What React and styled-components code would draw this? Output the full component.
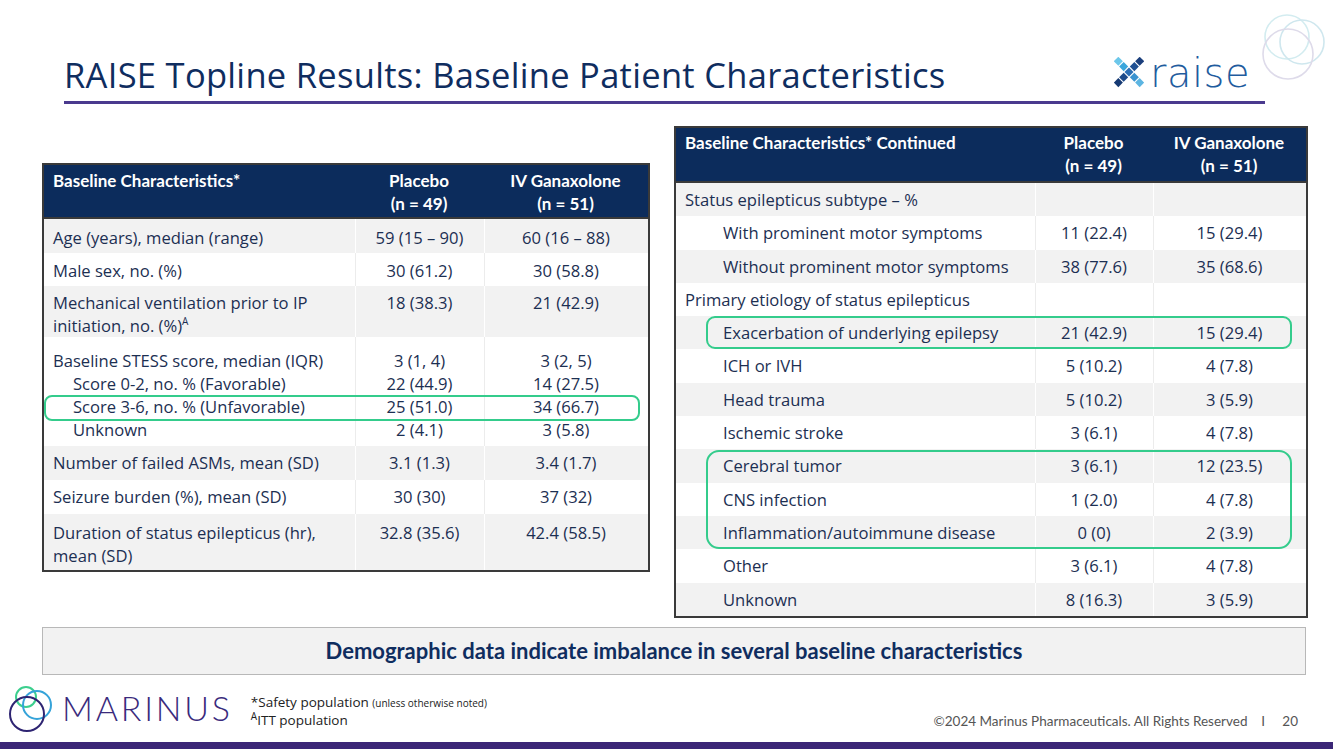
import React from "react";
import styled, { createGlobalStyle } from "styled-components";

const Global = createGlobalStyle`
  html, body { margin: 0; padding: 0; background: #fff; }
  body { font-family: "Open Sans", "Liberation Sans", sans-serif; }
`;

const NAVY = "#0c2c5c";
const TEXT = "#1c2f52";
const GREEN = "#34cc8c";

const Page = styled.div`
  width: 1333px;
  height: 749px;
  position: relative;
  overflow: hidden;
  display: flex;
  flex-direction: column;
  background: #fff;
`;

const Header = styled.header`
  margin: 0 68px 0 64px;
  padding-top: 53px;
  padding-bottom: 6px;
  border-bottom: 3px solid #4a3a8e;
  display: flex;
  align-items: flex-end;
  justify-content: space-between;
`;

const Title = styled.h1`
  margin: 0;
  font-family: "Open Sans", "Liberation Sans", sans-serif;
  font-weight: 400;
  font-size: 34.5px;
  line-height: 40px;
  color: #0f2d5f;
  letter-spacing: 0.3px;
  white-space: nowrap;
`;

const Brand = styled.div`
  display: flex;
  align-items: center;
  gap: 6px;
  margin-bottom: 2px;
  margin-right: 15px;
`;

const BrandWord = styled.span`
  font-family: "DejaVu Sans", Lato, sans-serif;
  font-weight: 200;
  font-size: 40px;
  line-height: 40px;
  color: #1f5c9e;
  letter-spacing: 0.5px;
`;

const Deco = styled.svg`
  position: absolute;
  right: 0;
  top: 0;
`;

const Content = styled.main`
  display: flex;
  align-items: flex-start;
  gap: 24px;
  padding: 22px 0 0 42px;
`;

const TableBox = styled.div`
  position: relative;
  width: ${(p) => p.w}px;
  margin-top: ${(p) => p.top || 0}px;
  border: 2px solid #3a3a3a;
  box-sizing: border-box;
  color: ${TEXT};
`;

const Row = styled.div`
  display: grid;
  grid-template-columns: ${(p) => p.cols};
  background: ${(p) => (p.head ? NAVY : p.shade ? "#f2f2f2" : "#fff")};
  color: ${(p) => (p.head ? "#fff" : TEXT)};
  font-family: ${(p) => (p.head ? "Lato, 'Open Sans', sans-serif" : "'Open Sans', sans-serif")};
  font-weight: ${(p) => (p.head ? 700 : 400)};
  font-size: ${(p) => (p.head ? "17px" : "16.6px")};
  min-height: ${(p) => p.h}px;
  box-sizing: border-box;
  border-bottom: ${(p) => (p.head ? "2px solid #3a3a3a" : "none")};
`;

const Cell = styled.div`
  padding: ${(p) => p.pt ?? 5}px 10px 0 ${(p) => (p.indent ? 47 : 9)}px;
  line-height: 23px;
  text-align: ${(p) => (p.center ? "center" : "left")};
  border-left: ${(p) => (p.sep ? `1px solid ${p.sepColor}` : "none")};
  white-space: nowrap;
`;

const Sub = styled.div`
  padding-left: ${(p) => (p.in ? 20 : 0)}px;
`;

const Sup = styled.sup`
  font-size: 10px;
  line-height: 0;
`;

const Highlight = styled.div`
  position: absolute;
  left: ${(p) => p.x}px;
  top: ${(p) => p.y}px;
  width: ${(p) => p.w}px;
  height: ${(p) => p.h}px;
  border: 2.5px solid ${GREEN};
  border-radius: ${(p) => p.r}px;
  box-sizing: border-box;
  pointer-events: none;
`;

const Banner = styled.div`
  margin: ${(p) => p.mt}px 0 0 42px;
  width: 1264px;
  height: 48px;
  box-sizing: border-box;
  background: #f2f2f2;
  border: 1px solid #b8b8b8;
  display: flex;
  align-items: center;
  justify-content: center;
  font-family: Lato, "Open Sans", sans-serif;
  font-weight: 700;
  font-size: 22px;
  color: #0f2d5f;
`;

const Footer = styled.footer`
  flex: 1;
  display: flex;
  align-items: center;
  padding: 0 35px 0 8px;
`;

const Logo = styled.div`
  display: flex;
  align-items: center;
  gap: 6px;
`;

const LogoWord = styled.span`
  font-family: Lato, "Liberation Sans", sans-serif;
  font-weight: 300;
  font-size: 34px;
  letter-spacing: 2.8px;
  color: #3a2a7c;
  line-height: 40px;
`;

const Notes = styled.div`
  margin-left: 18px;
  margin-top: 6px;
  font-size: 13.5px;
  line-height: 17px;
  color: #222;
`;

const Small = styled.span`
  font-size: 10px;
`;

const Copy = styled.div`
  margin-left: auto;
  margin-top: 26px;
  font-family: Lato, "Open Sans", sans-serif;
  font-size: 13.5px;
  color: #555;
  white-space: pre;
`;

const BottomBar = styled.div`
  height: 7px;
  background: #3b2677;
`;

const LEFT_COLS = "311px 129px 164px";
const RIGHT_COLS = "359px 118px 153px";

const leftRows = [
  { h: 34, pt: 7, label: "Age (years), median (range)", a: "59 (15 – 90)", b: "60 (16 – 88)" },
  { h: 33, pt: 6, label: "Male sex, no. (%)", a: "30 (61.2)", b: "30 (58.8)" },
  {
    h: 51,
    label: (
      <>
        Mechanical ventilation prior to IP
        <br />
        initiation, no. (%)<Sup>A</Sup>
      </>
    ),
    a: "18 (38.3)",
    b: "21 (42.9)",
    pt: 5,
  },
  {
    h: 109,
    pt: 12,
    label: (
      <>
        <Sub>Baseline STESS score, median (IQR)</Sub>
        <Sub in>Score 0-2, no. % (Favorable)</Sub>
        <Sub in>Score 3-6, no. % (Unfavorable)</Sub>
        <Sub in>Unknown</Sub>
      </>
    ),
    a: (
      <>
        <Sub>3 (1, 4)</Sub>
        <Sub>22 (44.9)</Sub>
        <Sub>25 (51.0)</Sub>
        <Sub>2 (4.1)</Sub>
      </>
    ),
    b: (
      <>
        <Sub>3 (2, 5)</Sub>
        <Sub>14 (27.5)</Sub>
        <Sub>34 (66.7)</Sub>
        <Sub>3 (5.8)</Sub>
      </>
    ),
  },
  { h: 34, label: "Number of failed ASMs, mean (SD)", a: "3.1 (1.3)", b: "3.4 (1.7)" },
  { h: 34, label: "Seizure burden (%), mean (SD)", a: "30 (30)", b: "37 (32)" },
  {
    h: 56,
    pt: 7,
    label: (
      <>
        Duration of status epilepticus (hr),
        <br />
        mean (SD)
      </>
    ),
    a: "32.8 (35.6)",
    b: "42.4 (58.5)",
  },
];

const rightRows = [
  { label: "Status epilepticus subtype – %", a: "", b: "" },
  { label: "With prominent motor symptoms", a: "11 (22.4)", b: "15 (29.4)", indent: true },
  { label: "Without prominent motor symptoms", a: "38 (77.6)", b: "35 (68.6)", indent: true },
  { label: "Primary etiology of status epilepticus", a: "", b: "" },
  { label: "Exacerbation of underlying epilepsy", a: "21 (42.9)", b: "15 (29.4)", indent: true },
  { label: "ICH or IVH", a: "5 (10.2)", b: "4 (7.8)", indent: true },
  { label: "Head trauma", a: "5 (10.2)", b: "3 (5.9)", indent: true },
  { label: "Ischemic stroke", a: "3 (6.1)", b: "4 (7.8)", indent: true },
  { label: "Cerebral tumor", a: "3 (6.1)", b: "12 (23.5)", indent: true },
  { label: "CNS infection", a: "1 (2.0)", b: "4 (7.8)", indent: true },
  { label: "Inflammation/autoimmune disease", a: "0 (0)", b: "2 (3.9)", indent: true },
  { label: "Other", a: "3 (6.1)", b: "4 (7.8)", indent: true },
  { label: "Unknown", a: "8 (16.3)", b: "3 (5.9)", indent: true },
];

function HeadRow({ cols, h, title, pt }) {
  return (
    <Row head cols={cols} h={h}>
      <Cell pt={pt}>{title}</Cell>
      <Cell pt={pt} center>
        Placebo
        <br />
        (n = 49)
      </Cell>
      <Cell pt={pt} center>
        IV Ganaxolone
        <br />
        (n = 51)
      </Cell>
    </Row>
  );
}

function BodyRow({ cols, r, shade, h }) {
  const sepColor = shade ? "#ffffff" : "#ececec";
  return (
    <Row cols={cols} shade={shade} h={h}>
      <Cell pt={r.pt} indent={r.indent}>{r.label}</Cell>
      <Cell pt={r.pt} center sep sepColor={sepColor}>{r.a}</Cell>
      <Cell pt={r.pt} center sep sepColor={sepColor}>{r.b}</Cell>
    </Row>
  );
}

function XMark() {
  const tiles = [
    { x: 4, y: 4, c: "#6cc7ea" },
    { x: 9, y: 9, c: "#3aa6dc" },
    { x: 24, y: 4, c: "#1b3f7c" },
    { x: 19, y: 9, c: "#1f4f92" },
    { x: 14, y: 14, c: "#2a6db4" },
    { x: 9, y: 19, c: "#1d4a8a" },
    { x: 4, y: 24, c: "#163a73" },
    { x: 19, y: 19, c: "#3a93d0" },
    { x: 24, y: 24, c: "#5cb5e2" },
  ];
  return (
    <svg width="30" height="32" viewBox="0 0 28 30">
      {tiles.map((t, i) => (
        <rect
          key={i}
          x={t.x - 3}
          y={t.y - 3}
          width="6"
          height="6"
          fill={t.c}
          transform={`rotate(45 ${t.x} ${t.y})`}
        />
      ))}
    </svg>
  );
}

function MarinusMark() {
  return (
    <svg width="48" height="50" viewBox="0 0 48 50">
      <circle cx="18" cy="14" r="10" fill="none" stroke="#3ccf8e" strokeWidth="2" />
      <circle cx="29" cy="22" r="14" fill="none" stroke="#35a3d9" strokeWidth="2" />
      <circle cx="19" cy="31" r="17" fill="none" stroke="#2e2472" strokeWidth="2" />
    </svg>
  );
}

export default function App() {
  return (
    <Page>
      <Global />
      <Deco width="80" height="90" viewBox="0 0 80 90">
        <circle cx="34" cy="37" r="22" fill="none" stroke="#d3ecf0" strokeWidth="1.6" />
        <circle cx="49" cy="42" r="22" fill="none" stroke="#cfe7ee" strokeWidth="1.6" />
        <circle cx="35" cy="54" r="25" fill="none" stroke="#dedbea" strokeWidth="1.6" />
      </Deco>
      <Header>
        <Title>RAISE Topline Results: Baseline Patient Characteristics</Title>
        <Brand>
          <XMark />
          <BrandWord>raise</BrandWord>
        </Brand>
      </Header>

      <Content>
        <TableBox w={608} top={37}>
          <HeadRow cols={LEFT_COLS} h={54} pt={4} title="Baseline Characteristics*" />
          {leftRows.map((r, i) => (
            <BodyRow key={i} cols={LEFT_COLS} r={r} h={r.h} shade={i % 2 === 0} />
          ))}
          <Highlight x={0} y={230} w={596} h={26} r={8} />
        </TableBox>

        <TableBox w={634}>
          <HeadRow cols={RIGHT_COLS} h={55} pt={3} title="Baseline Characteristics* Continued" />
          {rightRows.map((r, i) => (
            <BodyRow key={i} cols={RIGHT_COLS} r={r} h={33.3} shade={i % 2 === 0} />
          ))}
          <Highlight x={30} y={188} w={586} h={33} r={9} />
          <Highlight x={30} y={322} w={586} h={99} r={13} />
        </TableBox>
      </Content>

      <Banner mt={9}>Demographic data indicate imbalance in several baseline characteristics</Banner>

      <Footer>
        <Logo>
          <MarinusMark />
          <LogoWord>MARINUS</LogoWord>
        </Logo>
        <Notes>
          <div>
            *Safety population <Small>(unless otherwise noted)</Small>
          </div>
          <div>
            <Sup>A</Sup>ITT population
          </div>
        </Notes>
        <Copy>{"©2024 Marinus Pharmaceuticals. All Rights Reserved    I     20"}</Copy>
      </Footer>
      <BottomBar />
    </Page>
  );
}
